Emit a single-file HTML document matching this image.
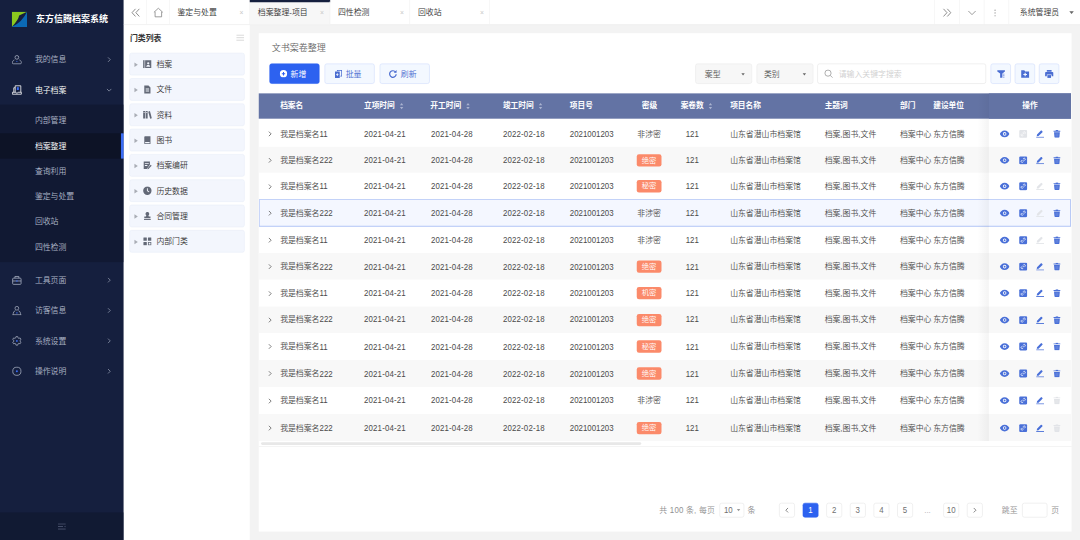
<!DOCTYPE html><html lang="zh-CN"><head><meta charset="utf-8"><title>东方信腾档案系统</title><style>
*{box-sizing:border-box;margin:0;padding:0}
html,body{width:1080px;height:540px;overflow:hidden;background:#f3f3f3}
body{font-family:"Liberation Sans","Noto Sans CJK SC",sans-serif;font-size:14px;color:#444;font-weight:350}
#app{position:absolute;left:0;top:0;width:1920px;height:960px;transform:scale(0.5625);transform-origin:0 0;background:#f3f3f3;overflow:hidden}
.abs{position:absolute}
svg{display:block}
/* sidebar */
#side{position:absolute;left:0;top:0;width:220px;height:960px;background:#151f3e;color:#aeb6c8}
#logo{position:absolute;left:21px;top:21px;width:27px;height:27px}
#title{position:absolute;left:64px;top:22px;font-size:16px;font-weight:700;color:#fff;line-height:24px;white-space:nowrap;letter-spacing:0px}
.mi{position:absolute;left:0;width:220px;height:54px;line-height:54px;padding-left:62px;font-size:14px;color:#aeb6c8;white-space:nowrap}
.mi svg.ic{position:absolute;left:21px;top:18px}
.mi svg.ar{position:absolute;left:189px;top:22px}
#sub{position:absolute;left:0;top:186px;width:220px;height:280px;background:#111933}
.si{position:absolute;left:0;width:220px;height:45px;line-height:45px;padding-left:62px;font-size:14px;color:#aeb6c8;white-space:nowrap}
.si.on{background:#0d1326;color:#fff;border-right:5px solid #3b6df5}
#sfoot{position:absolute;left:0;top:911px;width:220px;height:49px;background:#111a33}
/* tab bar */
#tabs{position:absolute;left:220px;top:0;width:1700px;height:43.5px;background:#fff;border-bottom:1px solid #ececec;box-shadow:0 1px 3px rgba(0,0,0,0.05);z-index:3}
.tcell{position:absolute;top:0;height:43px;border-right:1px solid #f0f0f0}
.tab{position:absolute;top:0;height:43px;width:142.3px;border-right:1px solid #f0f0f0;line-height:44.4px;padding-left:14px;font-size:14px;color:#333;white-space:nowrap}
.tab .x{position:absolute;right:10px;top:0;color:#c8c8c8;font-size:12px}
.tab.on{background:#f7f7f7;border-top:4px solid #151f3e;line-height:37.5px}
/* left panel */
#cat{position:absolute;left:220px;top:44px;width:224px;height:916px;background:#fff}
#cat h3{position:absolute;left:11px;top:12px;font-size:14px;font-weight:700;color:#333;line-height:22px}
.node{position:absolute;left:10px;width:205px;height:40px;background:#f3f6fd;border:1px solid #e8edf8;border-radius:4px;line-height:38px;padding-left:47px;font-size:14px;color:#333;white-space:nowrap}
.node .tri{position:absolute;left:8px;top:15.5px;width:0;height:0;border-left:6px solid #a9adb5;border-top:4.5px solid transparent;border-bottom:4.5px solid transparent}
.node svg{position:absolute;left:23px;top:11px}
/* card */
#card{position:absolute;left:460px;top:59px;width:1445px;height:886px;background:#fff}
#ctitle{position:absolute;left:23px;top:14px;font-size:16px;color:#666;line-height:24px}
.btn{position:absolute;top:54px;height:36px;width:89px;border-radius:4px;font-size:14px;line-height:34px;white-space:nowrap;border:1px solid #cfdcfb;background:#f3f8ff;color:#4a6cd0;padding-left:36.5px}
.btn.pri{background:#2d62f0;border-color:#2d62f0;color:#fff}
.btn svg{position:absolute;left:17px;top:10px}
.sel{position:absolute;top:54px;height:36px;width:101px;border-radius:4px;border:1px solid #e9e9e9;background:#f7f7f7;line-height:34px;padding-left:16px;font-size:14px;color:#555}
.sel i{position:absolute;right:12.5px;top:15.5px;width:0;height:0;border-top:4.5px solid #666;border-left:3.7px solid transparent;border-right:3.7px solid transparent}
#search{position:absolute;left:993px;top:54px;width:300px;height:36px;border:1px solid #e2e2e2;border-radius:4px;background:#fff;line-height:34px;padding-left:37px;color:#cfcfcf;font-size:14px}
#search svg{position:absolute;left:11px;top:9px}
.ib{position:absolute;top:54px;width:36px;height:36px;border-radius:4px;border:1px solid #cfdcfb;background:#f3f8ff}
.ib svg{position:absolute;left:9px;top:9px}
/* table */
#thead{position:absolute;left:0;top:107px;width:1444px;height:45px;background:#6373a4;color:#fff;font-weight:700;font-size:13.7px;line-height:44px}
#thead span{position:absolute;top:0;white-space:nowrap}
.sort{position:absolute;top:17px;width:8px;height:12px}
.sort:before{content:"";position:absolute;left:0;top:0;border-bottom:4px solid #aab3d0;border-left:3.5px solid transparent;border-right:3.5px solid transparent}
.sort:after{content:"";position:absolute;left:0;top:7px;border-top:4px solid #aab3d0;border-left:3.5px solid transparent;border-right:3.5px solid transparent}
.row{position:absolute;left:0;width:1444px;height:47.5px;line-height:47.5px;font-size:14px;color:#4a4a4a;white-space:nowrap}
.row.alt{background:#f8f8f8}
.row.cur{background:#f4f7ff;box-shadow:inset 0 0 0 1.6px #b3c5f6}
.row span{position:absolute;top:0.9px}
.row .dt{letter-spacing:0.300px}
.row .d,.n{display:inline-block;transform:scaleY(1.16);transform-origin:50% 56%}
.row .exp{left:15.4px;top:calc(50% - 5.1px)}
.row .tag{position:absolute;left:672px;top:calc(50% - 10.4px);width:44px;height:22px;border-radius:4px;background:#fb8a6a;color:#fff;font-size:13px;line-height:22px;text-align:center}
#fixsh{position:absolute;left:1278px;top:107px;width:20px;height:618px;background:linear-gradient(to right,rgba(0,0,0,0),rgba(0,0,0,0.045))}
.op{position:absolute;top:calc(50% - 7.5px)}
/* pagination */
.pg{position:absolute;top:835px;height:26px;width:28px;border:1px solid #e4e4e4;border-radius:4px;background:#fff;font-size:14px;color:#707070;text-align:center;line-height:24px}
.pg.on{background:#2d62f0;border-color:#2d62f0;color:#fff}
.pt{position:absolute;top:835px;height:26px;line-height:26px;font-size:14px;color:#919191;white-space:nowrap}
</style></head><body><div id="app">
<div id="side">
<svg id="logo" viewBox="0 0 27 27"><rect width="27" height="27" fill="#0b69b5"/><path d="M0 0H27L0 27Z" fill="#8cc81f"/><path d="M27 0L13 6.500Q12 14 0 27Q19 18 27 0Z" fill="#151f3e"/></svg>
<div id="title">东方信腾档案系统</div>
<div class="mi" style="top:78.8px"><svg class="ic" width="18" height="18" viewBox="0 0 18 18" fill="none" stroke="#aab1c3" stroke-width="1.4"><circle cx="9" cy="5" r="3.3"/><path d="M4.5 9.5C2 10.5 1 12.5 1 14.5Q1 16.5 3 16.5H15Q17 16.5 17 14.5C17 12.5 16 10.5 13.5 9.5"/><circle cx="9" cy="12" r="1" fill="#3a6af0" stroke="none"/></svg>我的信息<svg class="ar" width="10" height="10" viewBox="0 0 10 10"><path d="M3 1l4 4-4 4" fill="none" stroke="#8d96ab" stroke-width="1.4"/></svg></div>
<div class="mi" style="top:132.8px;color:#fff"><svg class="ic" width="18" height="18" viewBox="0 0 18 18" fill="none" stroke="#fff" stroke-width="1.4"><path d="M6 1.5H16V13"/><path d="M6 1.5V13"/><path d="M1 16.5H17V13H11.5Q11 14.5 9 14.5Q7 14.5 6.500 13H1Z"/><path d="M3.500 13V5H6"/><rect x="9" y="4" width="3.500" height="5" fill="#3a6af0" stroke="none"/></svg>电子档案<svg class="ar" width="10" height="10" viewBox="0 0 10 10"><path d="M1 3l4 4 4-4" fill="none" stroke="#8d96ab" stroke-width="1.4"/></svg></div>
<div id="sub">
<div class="si" style="top:5.5px">内部管理</div>
<div class="si on" style="top:50.5px">档案整理</div>
<div class="si" style="top:95.5px">查询利用</div>
<div class="si" style="top:140.5px">鉴定与处置</div>
<div class="si" style="top:185.5px">回收站</div>
<div class="si" style="top:230.5px">四性检测</div>
</div>
<div class="mi" style="top:470.8px"><svg class="ic" width="18" height="18" viewBox="0 0 18 18" fill="none" stroke="#aab1c3" stroke-width="1.4"><rect x="1.500" y="5.500" width="15" height="11" rx="1.500"/><path d="M5.500 5.500V2.500H12.500V5.500"/><path d="M1.500 10.500H16.500"/><path d="M7.500 10.500h3" stroke="#3a6af0" stroke-width="2"/></svg>工具页面<svg class="ar" width="10" height="10" viewBox="0 0 10 10"><path d="M3 1l4 4-4 4" fill="none" stroke="#8d96ab" stroke-width="1.4"/></svg></div>
<div class="mi" style="top:524.8px"><svg class="ic" width="18" height="18" viewBox="0 0 18 18" fill="none" stroke="#aab1c3" stroke-width="1.300"><circle cx="9" cy="5" r="3.300"/><path d="M2.500 16.500V14.500Q2.500 10.500 6.300 9.300M15.500 16.500V14.500Q15.500 10.500 11.700 9.300M1 16.500H17"/><path d="M7.500 13.300h3" stroke="#3a6af0" stroke-width="1.600"/></svg>访客信息<svg class="ar" width="10" height="10" viewBox="0 0 10 10"><path d="M3 1l4 4-4 4" fill="none" stroke="#8d96ab" stroke-width="1.4"/></svg></div>
<div class="mi" style="top:578.8px"><svg class="ic" width="18" height="18" viewBox="0 0 18 18" fill="none" stroke="#aab1c3" stroke-width="1.300" stroke-linejoin="round"><path d="M6.9 3.8L7.4 1.4L10.6 1.4L11.1 3.8L12.4 4.6L14.8 3.8L16.4 6.6L14.5 8.2L14.5 9.8L16.4 11.4L14.8 14.2L12.4 13.4L11.1 14.2L10.6 16.6L7.4 16.6L6.9 14.2L5.6 13.4L3.2 14.2L1.6 11.4L3.5 9.8L3.5 8.2L1.6 6.6L3.2 3.8L5.6 4.6Z"/><circle cx="9" cy="9" r="1.700" fill="#3a6af0" stroke="none"/></svg>系统设置<svg class="ar" width="10" height="10" viewBox="0 0 10 10"><path d="M3 1l4 4-4 4" fill="none" stroke="#8d96ab" stroke-width="1.4"/></svg></div>
<div class="mi" style="top:632.8px"><svg class="ic" width="18" height="18" viewBox="0 0 18 18" fill="none" stroke="#aab1c3" stroke-width="1.4"><circle cx="9" cy="9" r="7.300"/><circle cx="9" cy="9" r="1.800" fill="#3a6af0" stroke="none"/></svg>操作说明<svg class="ar" width="10" height="10" viewBox="0 0 10 10"><path d="M3 1l4 4-4 4" fill="none" stroke="#8d96ab" stroke-width="1.4"/></svg></div>
<div id="sfoot"><svg class="abs" style="left:103px;top:19px" width="14" height="12" viewBox="0 0 14 12"><path d="M0 1.500H14M0 6H9M0 10.500H14" stroke="#4f5873" stroke-width="1.500"/><path d="M13.500 4.500V7.500L11 6Z" fill="#4f5873"/></svg></div>
</div>
<div id="tabs">
<div class="tcell" style="left:0;width:41px"><svg class="abs" style="left:12.500px;top:14px" width="17" height="17" viewBox="0 0 15 15" fill="none" stroke="#777" stroke-width="1.300"><path d="M7 1.500L1.500 7.500L7 13.500M13 1.500L7.500 7.500L13 13.500"/></svg></div>
<div class="tcell" style="left:41px;width:41px"><svg class="abs" style="left:10.500px;top:12.500px" width="19" height="19" viewBox="0 0 18 18" fill="none" stroke="#808080" stroke-width="1.300"><path d="M1.500 8.500L9 1.500L16.500 8.500"/><path d="M3.500 7.500V16H14.500V7.500"/></svg></div>
<div class="tab" style="left:81.5px">鉴定与处置<span class="x">×</span></div>
<div class="tab on" style="left:224.4px">档案整理-项目<span class="x">×</span></div>
<div class="tab" style="left:366.7px">四性检测<span class="x">×</span></div>
<div class="tab" style="left:509px">回收站<span class="x">×</span></div>
<div class="tcell" style="left:1441px;width:45px;border-left:1px solid #f0f0f0"><svg class="abs" style="left:13px;top:14.300px" width="17" height="17" viewBox="0 0 15 15" fill="none" stroke="#777" stroke-width="1.300"><path d="M2 1.500L7.500 7.500L2 13.500M8 1.500L13.500 7.500L8 13.500"/></svg></div>
<div class="tcell" style="left:1486px;width:44px"><svg class="abs" style="left:14px;top:17.800px" width="16" height="10" viewBox="0 0 16 10" fill="none" stroke="#777" stroke-width="1.300"><path d="M1.500 1.500L8 8L14.500 1.500"/></svg></div>
<div class="tcell" style="left:1530px;width:44px"><svg class="abs" style="left:16.600px;top:16px" width="4" height="14" viewBox="0 0 4 14" fill="#8a8a8a"><circle cx="2" cy="2" r="1.100"/><circle cx="2" cy="7" r="1.100"/><circle cx="2" cy="12" r="1.100"/></svg></div>
<div class="abs" style="left:1593px;top:0.800px;line-height:43px;font-size:14px;color:#333;white-space:nowrap">系统管理员</div>
<div class="abs" style="left:1680.500px;top:20.300px;width:0;height:0;border-top:5.500px solid #666;border-left:4.500px solid transparent;border-right:4.500px solid transparent"></div>
</div>
<div id="cat"><h3>门类列表</h3>
<svg class="abs" style="left:199.600px;top:17px" width="14" height="12" viewBox="0 0 14 12"><path d="M0 1.500H14M0 6H14M0 10.500H14" stroke="#cfcfcf" stroke-width="1.400"/></svg>
<div class="node" style="top:50px"><i class="tri"></i><svg width="16" height="16" viewBox="0 0 16 16" fill="#636977"><rect x="0.500" y="1" width="2.500" height="14"/><path d="M4 1H15V15H4Z M9.500 4.500A2 2 0 1 0 9.500 8.500A2 2 0 1 0 9.500 4.500Z M6 12.500C6 10.500 7.500 9.500 9.500 9.500C11.500 9.500 13 10.500 13 12.500Z" fill-rule="evenodd"/></svg>档案</div>
<div class="node" style="top:95px"><i class="tri"></i><svg width="16" height="16" viewBox="0 0 16 16" fill="#636977"><path d="M2.500 1H10L13.500 4.500V15H2.500Z M5 6.500H11V8H5Z M5 10H11V11.500H5Z" fill-rule="evenodd"/></svg>文件</div>
<div class="node" style="top:140px"><i class="tri"></i><svg width="16" height="16" viewBox="0 0 16 16" fill="#636977"><path d="M0.500 1.500H4V14.500H0.500ZM1.300 3.500H3.200V5H1.300Z" fill-rule="evenodd"/><path d="M5 1.500H8.500V14.500H5ZM5.800 3.500H7.700V5H5.800Z" fill-rule="evenodd"/><path d="M9.500 2.500L12.500 1.500L16 14L13 15Z"/></svg>资料</div>
<div class="node" style="top:185px"><i class="tri"></i><svg width="16" height="16" viewBox="0 0 16 16" fill="#636977"><path d="M2.500 2.500Q2.500 1 4 1H13.500V15H4Q2.500 15 2.500 13.500Z M4 11.500V13.500H12V11.500Z" fill-rule="evenodd"/></svg>图书</div>
<div class="node" style="top:230px"><i class="tri"></i><svg width="16" height="16" viewBox="0 0 16 16" fill="#636977"><path d="M1.500 1H12.500V7L7 14.500H1.500Z M3.500 4H10.500V5.500H3.500Z M3.500 7.500H8V9H3.500Z" fill-rule="evenodd"/><path d="M14 7L15.500 8.500L10 14.500L8 15L8.500 13Z"/></svg>档案编研</div>
<div class="node" style="top:275px"><i class="tri"></i><svg width="16" height="16" viewBox="0 0 16 16" fill="#636977"><path d="M8 0.500A7.500 7.500 0 1 0 8 15.500A7.500 7.500 0 1 0 8 0.500Z M7.200 3.500H8.800V7.700L11.500 9.300L10.700 10.600L7.200 8.500Z" fill-rule="evenodd"/></svg>历史数据</div>
<div class="node" style="top:320px"><i class="tri"></i><svg width="16" height="16" viewBox="0 0 16 16" fill="#636977"><path d="M8 1A3.200 3.200 0 0 1 10 6.800L10.500 9H13.500V12H2.500V9H5.500L6 6.800A3.200 3.200 0 0 1 8 1Z"/><rect x="2" y="13.300" width="12" height="1.700"/></svg>合同管理</div>
<div class="node" style="top:365px"><i class="tri"></i><svg width="16" height="16" viewBox="0 0 16 16" fill="#636977"><rect x="1" y="1" width="6" height="6" rx="0.500"/><rect x="9" y="1" width="6" height="6" rx="0.500"/><rect x="1" y="9" width="6" height="6" rx="0.500"/><path d="M9 9H15V15H9Z M10.500 10.500V13.500H13.500V10.500Z" fill-rule="evenodd"/></svg>内部门类</div>
</div>
<div id="card">
<div id="ctitle">文书案卷整理</div>
<div class="btn pri" style="left:19px"><svg width="14" height="14" viewBox="0 0 14 14"><circle cx="7" cy="7" r="6.500" fill="#fff"/><path d="M7 4V10M4 7H10" stroke="#2b5cf0" stroke-width="1.800"/></svg>新增</div>
<div class="btn" style="left:117px"><svg width="15" height="15" viewBox="0 0 15 15" fill="#4a6cd0"><path d="M0.500 3H9V14.500H0.500Z M3.900 6V7.800H2.500V9.200H3.900V11H5.300V9.200H6.700V7.800H5.300V6Z" fill-rule="evenodd"/><path d="M4 0.500H13V12H10V10.700H11.700V1.800H5.300V2.500H4Z"/></svg>批量</div>
<div class="btn" style="left:215px"><svg style="left:14.500px" width="15" height="15" viewBox="0 0 15 15" fill="none" stroke="#4a6cd0" stroke-width="2.200"><path d="M12.300 4.300A5.800 5.800 0 1 0 13.300 8"/><path d="M14 0.500V5.500H9Z" fill="#4a6cd0" stroke="none"/></svg>刷新</div>
<div class="sel" style="left:776px">案型<i></i></div>
<div class="sel" style="left:885px;padding-left:12px">类别<i></i></div>
<div id="search"><svg width="16" height="16" viewBox="0 0 16 16" fill="none" stroke="#999" stroke-width="1.400"><circle cx="7" cy="7" r="5.500"/><path d="M11 11L15 15"/></svg>请输入关键字搜索</div>
<div class="ib" style="left:1300.8px"><svg width="17" height="17" viewBox="0 0 17 17" fill="#4a6dd2"><path d="M2 2H15.500V4.200L11 7.500V15H7V7.500L2 4.200Z"/><rect x="12.800" y="8" width="1.600" height="1.600"/><rect x="12.800" y="10.700" width="1.600" height="1.600"/><rect x="12.800" y="13.400" width="1.600" height="1.600"/></svg></div>
<div class="ib" style="left:1344px"><svg width="17" height="17" viewBox="0 0 17 17" fill="#4a6dd2"><path d="M1.500 2H7L8.500 4H15.500V15H1.500Z M7.500 6.300V8.500H5.300V10.500H7.500V12.700H9.500V10.500H11.700V8.500H9.500V6.300Z" fill-rule="evenodd"/></svg></div>
<div class="ib" style="left:1387.2px"><svg width="17" height="17" viewBox="0 0 17 17" fill="#4a6dd2"><rect x="4" y="1.500" width="8.500" height="3"/><path d="M2.500 5H14Q15.500 5 15.500 6.500V12.500H12.500V9.500H4V12.500H1V6.500Q1 5 2.500 5Z"/><rect x="5" y="10.500" width="6.500" height="5"/></svg></div>
<div id="thead">
<span style="left:38px">档案名</span>
<span style="left:187px">立项时间</span>
<i class="sort" style="left:250.5px"></i>
<span style="left:305px">开工时间</span>
<i class="sort" style="left:368.5px"></i>
<span style="left:434px">竣工时间</span>
<i class="sort" style="left:497.5px"></i>
<span style="left:553px">项目号</span>
<span style="left:681px">密级</span>
<span style="left:750px">案卷数</span>
<i class="sort" style="left:799.5px"></i>
<span style="left:838px">项目名称</span>
<span style="left:1006px">主题词</span>
<span style="left:1140px">部门</span>
<span style="left:1199px">建设单位</span>
<div class="abs" style="left:1298px;top:0;width:146px;height:45px;background:#6373a4;text-align:center">操作</div>
</div>
<div class="row" style="top:154.9px;height:47.3px;line-height:47.3px">
<svg class="abs exp" width="10" height="12" viewBox="0 0 10 12"><path d="M3 2L7 6L3 10" fill="none" stroke="#666" stroke-width="1.500"/></svg>
<span style="left:38px">我是档案名<b class="n" style="font-weight:400">11</b></span><span class="d dt" style="left:187px">2021-04-21</span><span class="d dt" style="left:306px">2021-04-28</span><span class="d dt" style="left:434px">2022-02-18</span><span class="d" style="left:553px">2021001203</span>
<span style="left:673px">非涉密</span>
<span class="d" style="left:759px">121</span><span style="left:838px">山东省潜山市档案馆</span><span style="left:1006px">档案,图书,文件</span><span style="left:1140px">档案中心</span><span style="left:1199px">东方信腾</span>
<svg class="op" style="left:1317px" width="18" height="16" viewBox="0 0 18 16"><path d="M9 2C4.500 2 1.500 5.500 0.500 8C1.500 10.500 4.500 14 9 14C13.500 14 16.500 10.500 17.500 8C16.500 5.500 13.500 2 9 2ZM9 4.800A3.200 3.200 0 1 1 9 11.200A3.200 3.200 0 1 1 9 4.800Z" fill="#4a70d8" fill-rule="evenodd"/><circle cx="9" cy="8" r="1.700" fill="#4a70d8"/></svg><svg class="op" style="left:1351px" width="16" height="16" viewBox="0 0 16 16"><rect x="1" y="1" width="14" height="14" rx="2" fill="#e2e4e8"/><path d="M6.800 9.200L9.200 6.800M5.800 7.500L4.800 8.500A1.900 1.900 0 0 0 7.500 11.200L8.500 10.200M7.500 5.800L8.500 4.800A1.900 1.900 0 0 1 11.200 7.500L10.200 8.500" fill="none" stroke="#fff" stroke-width="1.300"/></svg><svg class="op" style="left:1382px;top:calc(50% - 6.5px)" width="14" height="14" viewBox="0 0 14 14"><path d="M1 11.200L1.600 8.200L8.600 1.200Q9.200 0.600 9.800 1.200L11.300 2.700Q11.900 3.300 11.300 3.900L4.300 10.900Z" fill="#4a70d8"/><rect x="0" y="12.300" width="14" height="1.600" fill="#4a70d8"/></svg><svg class="op" style="left:1411.700px;top:calc(50% - 6.5px)" width="14" height="14" viewBox="0 0 14 14"><path d="M4.800 0.300H9.200V1.600H13V3.200H1V1.600H4.800Z" fill="#4a70d8"/><path d="M1.800 4.200H12.200L11.400 12.600Q11.300 13.800 10.100 13.800H3.900Q2.700 13.800 2.600 12.600Z" fill="#4a70d8"/><path d="M5.200 6V11.800M7 6V11.800M8.800 6V11.800" stroke="#fff" stroke-opacity="0.300" stroke-width="0.800"/></svg>
</div>
<div class="row alt" style="top:202.2px;height:46.2px;line-height:46.2px">
<svg class="abs exp" width="10" height="12" viewBox="0 0 10 12"><path d="M3 2L7 6L3 10" fill="none" stroke="#666" stroke-width="1.500"/></svg>
<span style="left:38px">我是档案名<b class="n" style="font-weight:400">222</b></span><span class="d dt" style="left:187px">2021-04-21</span><span class="d dt" style="left:306px">2021-04-28</span><span class="d dt" style="left:434px">2022-02-18</span><span class="d" style="left:553px">2021001203</span>
<span class="tag">绝密</span>
<span class="d" style="left:759px">121</span><span style="left:838px">山东省潜山市档案馆</span><span style="left:1006px">档案,图书,文件</span><span style="left:1140px">档案中心</span><span style="left:1199px">东方信腾</span>
<svg class="op" style="left:1317px" width="18" height="16" viewBox="0 0 18 16"><path d="M9 2C4.500 2 1.500 5.500 0.500 8C1.500 10.500 4.500 14 9 14C13.500 14 16.500 10.500 17.500 8C16.500 5.500 13.500 2 9 2ZM9 4.800A3.200 3.200 0 1 1 9 11.200A3.200 3.200 0 1 1 9 4.800Z" fill="#4a70d8" fill-rule="evenodd"/><circle cx="9" cy="8" r="1.700" fill="#4a70d8"/></svg><svg class="op" style="left:1351px" width="16" height="16" viewBox="0 0 16 16"><rect x="1" y="1" width="14" height="14" rx="2" fill="#4a70d8"/><path d="M6.800 9.200L9.200 6.800M5.800 7.500L4.800 8.500A1.900 1.900 0 0 0 7.500 11.200L8.500 10.200M7.500 5.800L8.500 4.800A1.900 1.900 0 0 1 11.200 7.500L10.200 8.500" fill="none" stroke="#fff" stroke-width="1.300"/></svg><svg class="op" style="left:1382px;top:calc(50% - 6.5px)" width="14" height="14" viewBox="0 0 14 14"><path d="M1 11.200L1.600 8.200L8.600 1.200Q9.200 0.600 9.800 1.200L11.300 2.700Q11.900 3.300 11.300 3.900L4.300 10.900Z" fill="#4a70d8"/><rect x="0" y="12.300" width="14" height="1.600" fill="#4a70d8"/></svg><svg class="op" style="left:1411.700px;top:calc(50% - 6.5px)" width="14" height="14" viewBox="0 0 14 14"><path d="M4.800 0.300H9.200V1.600H13V3.200H1V1.600H4.800Z" fill="#4a70d8"/><path d="M1.800 4.200H12.200L11.400 12.600Q11.300 13.800 10.100 13.800H3.900Q2.700 13.800 2.600 12.600Z" fill="#4a70d8"/><path d="M5.200 6V11.800M7 6V11.800M8.800 6V11.800" stroke="#fff" stroke-opacity="0.300" stroke-width="0.800"/></svg>
</div>
<div class="row" style="top:248.4px;height:46.9px;line-height:46.9px">
<svg class="abs exp" width="10" height="12" viewBox="0 0 10 12"><path d="M3 2L7 6L3 10" fill="none" stroke="#666" stroke-width="1.500"/></svg>
<span style="left:38px">我是档案名<b class="n" style="font-weight:400">11</b></span><span class="d dt" style="left:187px">2021-04-21</span><span class="d dt" style="left:306px">2021-04-28</span><span class="d dt" style="left:434px">2022-02-18</span><span class="d" style="left:553px">2021001203</span>
<span class="tag">秘密</span>
<span class="d" style="left:759px">121</span><span style="left:838px">山东省潜山市档案馆</span><span style="left:1006px">档案,图书,文件</span><span style="left:1140px">档案中心</span><span style="left:1199px">东方信腾</span>
<svg class="op" style="left:1317px" width="18" height="16" viewBox="0 0 18 16"><path d="M9 2C4.500 2 1.500 5.500 0.500 8C1.500 10.500 4.500 14 9 14C13.500 14 16.500 10.500 17.500 8C16.500 5.500 13.500 2 9 2ZM9 4.800A3.200 3.200 0 1 1 9 11.200A3.200 3.200 0 1 1 9 4.800Z" fill="#4a70d8" fill-rule="evenodd"/><circle cx="9" cy="8" r="1.700" fill="#4a70d8"/></svg><svg class="op" style="left:1351px" width="16" height="16" viewBox="0 0 16 16"><rect x="1" y="1" width="14" height="14" rx="2" fill="#4a70d8"/><path d="M6.800 9.200L9.200 6.800M5.800 7.500L4.800 8.500A1.900 1.900 0 0 0 7.500 11.200L8.500 10.200M7.500 5.800L8.500 4.800A1.900 1.900 0 0 1 11.200 7.500L10.200 8.500" fill="none" stroke="#fff" stroke-width="1.300"/></svg><svg class="op" style="left:1382px;top:calc(50% - 6.5px)" width="14" height="14" viewBox="0 0 14 14"><path d="M1 11.200L1.600 8.200L8.600 1.200Q9.200 0.600 9.800 1.200L11.300 2.700Q11.900 3.300 11.300 3.900L4.300 10.900Z" fill="#e2e4e8"/><rect x="0" y="12.300" width="14" height="1.600" fill="#e2e4e8"/></svg><svg class="op" style="left:1411.700px;top:calc(50% - 6.5px)" width="14" height="14" viewBox="0 0 14 14"><path d="M4.800 0.300H9.200V1.600H13V3.200H1V1.600H4.800Z" fill="#4a70d8"/><path d="M1.800 4.200H12.200L11.400 12.600Q11.300 13.800 10.100 13.800H3.900Q2.700 13.800 2.600 12.600Z" fill="#4a70d8"/><path d="M5.200 6V11.800M7 6V11.800M8.800 6V11.800" stroke="#fff" stroke-opacity="0.300" stroke-width="0.800"/></svg>
</div>
<div class="row cur" style="top:295.3px;height:48.4px;line-height:48.4px">
<svg class="abs exp" width="10" height="12" viewBox="0 0 10 12"><path d="M3 2L7 6L3 10" fill="none" stroke="#666" stroke-width="1.500"/></svg>
<span style="left:38px">我是档案名<b class="n" style="font-weight:400">222</b></span><span class="d dt" style="left:187px">2021-04-21</span><span class="d dt" style="left:306px">2021-04-28</span><span class="d dt" style="left:434px">2022-02-18</span><span class="d" style="left:553px">2021001203</span>
<span style="left:673px">非涉密</span>
<span class="d" style="left:759px">121</span><span style="left:838px">山东省潜山市档案馆</span><span style="left:1006px">档案,图书,文件</span><span style="left:1140px">档案中心</span><span style="left:1199px">东方信腾</span>
<svg class="op" style="left:1317px" width="18" height="16" viewBox="0 0 18 16"><path d="M9 2C4.500 2 1.500 5.500 0.500 8C1.500 10.500 4.500 14 9 14C13.500 14 16.500 10.500 17.500 8C16.500 5.500 13.500 2 9 2ZM9 4.800A3.200 3.200 0 1 1 9 11.200A3.200 3.200 0 1 1 9 4.800Z" fill="#4a70d8" fill-rule="evenodd"/><circle cx="9" cy="8" r="1.700" fill="#4a70d8"/></svg><svg class="op" style="left:1351px" width="16" height="16" viewBox="0 0 16 16"><rect x="1" y="1" width="14" height="14" rx="2" fill="#4a70d8"/><path d="M6.800 9.200L9.200 6.800M5.800 7.500L4.800 8.500A1.900 1.900 0 0 0 7.500 11.200L8.500 10.200M7.500 5.800L8.500 4.800A1.900 1.900 0 0 1 11.200 7.500L10.200 8.500" fill="none" stroke="#fff" stroke-width="1.300"/></svg><svg class="op" style="left:1382px;top:calc(50% - 6.5px)" width="14" height="14" viewBox="0 0 14 14"><path d="M1 11.200L1.600 8.200L8.600 1.200Q9.200 0.600 9.800 1.200L11.300 2.700Q11.900 3.300 11.300 3.900L4.300 10.900Z" fill="#e2e4e8"/><rect x="0" y="12.300" width="14" height="1.600" fill="#e2e4e8"/></svg><svg class="op" style="left:1411.700px;top:calc(50% - 6.5px)" width="14" height="14" viewBox="0 0 14 14"><path d="M4.800 0.300H9.200V1.600H13V3.200H1V1.600H4.800Z" fill="#4a70d8"/><path d="M1.800 4.200H12.200L11.400 12.600Q11.300 13.800 10.100 13.800H3.900Q2.700 13.800 2.600 12.600Z" fill="#4a70d8"/><path d="M5.200 6V11.800M7 6V11.800M8.800 6V11.800" stroke="#fff" stroke-opacity="0.300" stroke-width="0.800"/></svg>
</div>
<div class="row" style="top:343.7px;height:47.1px;line-height:47.1px">
<svg class="abs exp" width="10" height="12" viewBox="0 0 10 12"><path d="M3 2L7 6L3 10" fill="none" stroke="#666" stroke-width="1.500"/></svg>
<span style="left:38px">我是档案名<b class="n" style="font-weight:400">11</b></span><span class="d dt" style="left:187px">2021-04-21</span><span class="d dt" style="left:306px">2021-04-28</span><span class="d dt" style="left:434px">2022-02-18</span><span class="d" style="left:553px">2021001203</span>
<span style="left:673px">非涉密</span>
<span class="d" style="left:759px">121</span><span style="left:838px">山东省潜山市档案馆</span><span style="left:1006px">档案,图书,文件</span><span style="left:1140px">档案中心</span><span style="left:1199px">东方信腾</span>
<svg class="op" style="left:1317px" width="18" height="16" viewBox="0 0 18 16"><path d="M9 2C4.500 2 1.500 5.500 0.500 8C1.500 10.500 4.500 14 9 14C13.500 14 16.500 10.500 17.500 8C16.500 5.500 13.500 2 9 2ZM9 4.800A3.200 3.200 0 1 1 9 11.200A3.200 3.200 0 1 1 9 4.800Z" fill="#4a70d8" fill-rule="evenodd"/><circle cx="9" cy="8" r="1.700" fill="#4a70d8"/></svg><svg class="op" style="left:1351px" width="16" height="16" viewBox="0 0 16 16"><rect x="1" y="1" width="14" height="14" rx="2" fill="#4a70d8"/><path d="M6.800 9.200L9.200 6.800M5.800 7.500L4.800 8.500A1.900 1.900 0 0 0 7.500 11.200L8.500 10.200M7.500 5.800L8.500 4.800A1.900 1.900 0 0 1 11.200 7.500L10.200 8.500" fill="none" stroke="#fff" stroke-width="1.300"/></svg><svg class="op" style="left:1382px;top:calc(50% - 6.5px)" width="14" height="14" viewBox="0 0 14 14"><path d="M1 11.200L1.600 8.200L8.600 1.200Q9.200 0.600 9.800 1.200L11.300 2.700Q11.900 3.300 11.300 3.900L4.300 10.900Z" fill="#e2e4e8"/><rect x="0" y="12.300" width="14" height="1.600" fill="#e2e4e8"/></svg><svg class="op" style="left:1411.700px;top:calc(50% - 6.5px)" width="14" height="14" viewBox="0 0 14 14"><path d="M4.800 0.300H9.200V1.600H13V3.200H1V1.600H4.800Z" fill="#4a70d8"/><path d="M1.800 4.200H12.200L11.400 12.600Q11.300 13.800 10.100 13.800H3.900Q2.700 13.800 2.600 12.600Z" fill="#4a70d8"/><path d="M5.200 6V11.800M7 6V11.800M8.800 6V11.800" stroke="#fff" stroke-opacity="0.300" stroke-width="0.800"/></svg>
</div>
<div class="row alt" style="top:390.8px;height:47.1px;line-height:47.1px">
<svg class="abs exp" width="10" height="12" viewBox="0 0 10 12"><path d="M3 2L7 6L3 10" fill="none" stroke="#666" stroke-width="1.500"/></svg>
<span style="left:38px">我是档案名<b class="n" style="font-weight:400">222</b></span><span class="d dt" style="left:187px">2021-04-21</span><span class="d dt" style="left:306px">2021-04-28</span><span class="d dt" style="left:434px">2022-02-18</span><span class="d" style="left:553px">2021001203</span>
<span class="tag">绝密</span>
<span class="d" style="left:759px">121</span><span style="left:838px">山东省潜山市档案馆</span><span style="left:1006px">档案,图书,文件</span><span style="left:1140px">档案中心</span><span style="left:1199px">东方信腾</span>
<svg class="op" style="left:1317px" width="18" height="16" viewBox="0 0 18 16"><path d="M9 2C4.500 2 1.500 5.500 0.500 8C1.500 10.500 4.500 14 9 14C13.500 14 16.500 10.500 17.500 8C16.500 5.500 13.500 2 9 2ZM9 4.800A3.200 3.200 0 1 1 9 11.200A3.200 3.200 0 1 1 9 4.800Z" fill="#4a70d8" fill-rule="evenodd"/><circle cx="9" cy="8" r="1.700" fill="#4a70d8"/></svg><svg class="op" style="left:1351px" width="16" height="16" viewBox="0 0 16 16"><rect x="1" y="1" width="14" height="14" rx="2" fill="#4a70d8"/><path d="M6.800 9.200L9.200 6.800M5.800 7.500L4.800 8.500A1.900 1.900 0 0 0 7.500 11.200L8.500 10.200M7.500 5.800L8.500 4.800A1.900 1.900 0 0 1 11.200 7.500L10.200 8.500" fill="none" stroke="#fff" stroke-width="1.300"/></svg><svg class="op" style="left:1382px;top:calc(50% - 6.5px)" width="14" height="14" viewBox="0 0 14 14"><path d="M1 11.200L1.600 8.200L8.600 1.200Q9.200 0.600 9.800 1.200L11.300 2.700Q11.900 3.300 11.300 3.900L4.300 10.900Z" fill="#4a70d8"/><rect x="0" y="12.300" width="14" height="1.600" fill="#4a70d8"/></svg><svg class="op" style="left:1411.700px;top:calc(50% - 6.5px)" width="14" height="14" viewBox="0 0 14 14"><path d="M4.800 0.300H9.200V1.600H13V3.200H1V1.600H4.800Z" fill="#4a70d8"/><path d="M1.800 4.200H12.200L11.400 12.600Q11.300 13.800 10.100 13.800H3.900Q2.700 13.800 2.600 12.600Z" fill="#4a70d8"/><path d="M5.200 6V11.800M7 6V11.800M8.800 6V11.800" stroke="#fff" stroke-opacity="0.300" stroke-width="0.800"/></svg>
</div>
<div class="row" style="top:437.9px;height:47.6px;line-height:47.6px">
<svg class="abs exp" width="10" height="12" viewBox="0 0 10 12"><path d="M3 2L7 6L3 10" fill="none" stroke="#666" stroke-width="1.500"/></svg>
<span style="left:38px">我是档案名<b class="n" style="font-weight:400">11</b></span><span class="d dt" style="left:187px">2021-04-21</span><span class="d dt" style="left:306px">2021-04-28</span><span class="d dt" style="left:434px">2022-02-18</span><span class="d" style="left:553px">2021001203</span>
<span class="tag">机密</span>
<span class="d" style="left:759px">121</span><span style="left:838px">山东省潜山市档案馆</span><span style="left:1006px">档案,图书,文件</span><span style="left:1140px">档案中心</span><span style="left:1199px">东方信腾</span>
<svg class="op" style="left:1317px" width="18" height="16" viewBox="0 0 18 16"><path d="M9 2C4.500 2 1.500 5.500 0.500 8C1.500 10.500 4.500 14 9 14C13.500 14 16.500 10.500 17.500 8C16.500 5.500 13.500 2 9 2ZM9 4.800A3.200 3.200 0 1 1 9 11.200A3.200 3.200 0 1 1 9 4.800Z" fill="#4a70d8" fill-rule="evenodd"/><circle cx="9" cy="8" r="1.700" fill="#4a70d8"/></svg><svg class="op" style="left:1351px" width="16" height="16" viewBox="0 0 16 16"><rect x="1" y="1" width="14" height="14" rx="2" fill="#4a70d8"/><path d="M6.800 9.200L9.200 6.800M5.800 7.500L4.800 8.500A1.900 1.900 0 0 0 7.500 11.200L8.500 10.200M7.500 5.800L8.500 4.800A1.900 1.900 0 0 1 11.200 7.500L10.200 8.500" fill="none" stroke="#fff" stroke-width="1.300"/></svg><svg class="op" style="left:1382px;top:calc(50% - 6.5px)" width="14" height="14" viewBox="0 0 14 14"><path d="M1 11.200L1.600 8.200L8.600 1.200Q9.200 0.600 9.800 1.200L11.300 2.700Q11.900 3.300 11.300 3.900L4.300 10.900Z" fill="#4a70d8"/><rect x="0" y="12.300" width="14" height="1.600" fill="#4a70d8"/></svg><svg class="op" style="left:1411.700px;top:calc(50% - 6.5px)" width="14" height="14" viewBox="0 0 14 14"><path d="M4.800 0.300H9.200V1.600H13V3.200H1V1.600H4.800Z" fill="#4a70d8"/><path d="M1.800 4.200H12.200L11.400 12.600Q11.300 13.800 10.100 13.800H3.900Q2.700 13.800 2.600 12.600Z" fill="#4a70d8"/><path d="M5.200 6V11.800M7 6V11.800M8.800 6V11.800" stroke="#fff" stroke-opacity="0.300" stroke-width="0.800"/></svg>
</div>
<div class="row alt" style="top:485.5px;height:47.0px;line-height:47.0px">
<svg class="abs exp" width="10" height="12" viewBox="0 0 10 12"><path d="M3 2L7 6L3 10" fill="none" stroke="#666" stroke-width="1.500"/></svg>
<span style="left:38px">我是档案名<b class="n" style="font-weight:400">222</b></span><span class="d dt" style="left:187px">2021-04-21</span><span class="d dt" style="left:306px">2021-04-28</span><span class="d dt" style="left:434px">2022-02-18</span><span class="d" style="left:553px">2021001203</span>
<span class="tag">绝密</span>
<span class="d" style="left:759px">121</span><span style="left:838px">山东省潜山市档案馆</span><span style="left:1006px">档案,图书,文件</span><span style="left:1140px">档案中心</span><span style="left:1199px">东方信腾</span>
<svg class="op" style="left:1317px" width="18" height="16" viewBox="0 0 18 16"><path d="M9 2C4.500 2 1.500 5.500 0.500 8C1.500 10.500 4.500 14 9 14C13.500 14 16.500 10.500 17.500 8C16.500 5.500 13.500 2 9 2ZM9 4.800A3.200 3.200 0 1 1 9 11.200A3.200 3.200 0 1 1 9 4.800Z" fill="#4a70d8" fill-rule="evenodd"/><circle cx="9" cy="8" r="1.700" fill="#4a70d8"/></svg><svg class="op" style="left:1351px" width="16" height="16" viewBox="0 0 16 16"><rect x="1" y="1" width="14" height="14" rx="2" fill="#4a70d8"/><path d="M6.800 9.200L9.200 6.800M5.800 7.500L4.800 8.500A1.900 1.900 0 0 0 7.500 11.200L8.500 10.200M7.500 5.800L8.500 4.800A1.900 1.900 0 0 1 11.200 7.500L10.200 8.500" fill="none" stroke="#fff" stroke-width="1.300"/></svg><svg class="op" style="left:1382px;top:calc(50% - 6.5px)" width="14" height="14" viewBox="0 0 14 14"><path d="M1 11.200L1.600 8.200L8.600 1.200Q9.200 0.600 9.800 1.200L11.300 2.700Q11.900 3.300 11.300 3.900L4.300 10.900Z" fill="#4a70d8"/><rect x="0" y="12.300" width="14" height="1.600" fill="#4a70d8"/></svg><svg class="op" style="left:1411.700px;top:calc(50% - 6.5px)" width="14" height="14" viewBox="0 0 14 14"><path d="M4.800 0.300H9.200V1.600H13V3.200H1V1.600H4.800Z" fill="#4a70d8"/><path d="M1.800 4.200H12.200L11.400 12.600Q11.300 13.800 10.100 13.800H3.900Q2.700 13.800 2.600 12.600Z" fill="#4a70d8"/><path d="M5.200 6V11.800M7 6V11.800M8.800 6V11.800" stroke="#fff" stroke-opacity="0.300" stroke-width="0.800"/></svg>
</div>
<div class="row" style="top:532.5px;height:48.0px;line-height:48.0px">
<svg class="abs exp" width="10" height="12" viewBox="0 0 10 12"><path d="M3 2L7 6L3 10" fill="none" stroke="#666" stroke-width="1.500"/></svg>
<span style="left:38px">我是档案名<b class="n" style="font-weight:400">11</b></span><span class="d dt" style="left:187px">2021-04-21</span><span class="d dt" style="left:306px">2021-04-28</span><span class="d dt" style="left:434px">2022-02-18</span><span class="d" style="left:553px">2021001203</span>
<span class="tag">秘密</span>
<span class="d" style="left:759px">121</span><span style="left:838px">山东省潜山市档案馆</span><span style="left:1006px">档案,图书,文件</span><span style="left:1140px">档案中心</span><span style="left:1199px">东方信腾</span>
<svg class="op" style="left:1317px" width="18" height="16" viewBox="0 0 18 16"><path d="M9 2C4.500 2 1.500 5.500 0.500 8C1.500 10.500 4.500 14 9 14C13.500 14 16.500 10.500 17.500 8C16.500 5.500 13.500 2 9 2ZM9 4.800A3.200 3.200 0 1 1 9 11.200A3.200 3.200 0 1 1 9 4.800Z" fill="#4a70d8" fill-rule="evenodd"/><circle cx="9" cy="8" r="1.700" fill="#4a70d8"/></svg><svg class="op" style="left:1351px" width="16" height="16" viewBox="0 0 16 16"><rect x="1" y="1" width="14" height="14" rx="2" fill="#4a70d8"/><path d="M6.800 9.200L9.200 6.800M5.800 7.500L4.800 8.500A1.900 1.900 0 0 0 7.500 11.200L8.500 10.200M7.500 5.800L8.500 4.800A1.900 1.900 0 0 1 11.200 7.500L10.200 8.500" fill="none" stroke="#fff" stroke-width="1.300"/></svg><svg class="op" style="left:1382px;top:calc(50% - 6.5px)" width="14" height="14" viewBox="0 0 14 14"><path d="M1 11.200L1.600 8.200L8.600 1.200Q9.200 0.600 9.800 1.200L11.300 2.700Q11.900 3.300 11.300 3.900L4.300 10.900Z" fill="#4a70d8"/><rect x="0" y="12.300" width="14" height="1.600" fill="#4a70d8"/></svg><svg class="op" style="left:1411.700px;top:calc(50% - 6.5px)" width="14" height="14" viewBox="0 0 14 14"><path d="M4.800 0.300H9.200V1.600H13V3.200H1V1.600H4.800Z" fill="#4a70d8"/><path d="M1.800 4.200H12.200L11.400 12.600Q11.300 13.800 10.100 13.800H3.900Q2.700 13.800 2.600 12.600Z" fill="#4a70d8"/><path d="M5.200 6V11.800M7 6V11.800M8.800 6V11.800" stroke="#fff" stroke-opacity="0.300" stroke-width="0.800"/></svg>
</div>
<div class="row alt" style="top:580.5px;height:48.0px;line-height:48.0px">
<svg class="abs exp" width="10" height="12" viewBox="0 0 10 12"><path d="M3 2L7 6L3 10" fill="none" stroke="#666" stroke-width="1.500"/></svg>
<span style="left:38px">我是档案名<b class="n" style="font-weight:400">222</b></span><span class="d dt" style="left:187px">2021-04-21</span><span class="d dt" style="left:306px">2021-04-28</span><span class="d dt" style="left:434px">2022-02-18</span><span class="d" style="left:553px">2021001203</span>
<span class="tag">绝密</span>
<span class="d" style="left:759px">121</span><span style="left:838px">山东省潜山市档案馆</span><span style="left:1006px">档案,图书,文件</span><span style="left:1140px">档案中心</span><span style="left:1199px">东方信腾</span>
<svg class="op" style="left:1317px" width="18" height="16" viewBox="0 0 18 16"><path d="M9 2C4.500 2 1.500 5.500 0.500 8C1.500 10.500 4.500 14 9 14C13.500 14 16.500 10.500 17.500 8C16.500 5.500 13.500 2 9 2ZM9 4.800A3.200 3.200 0 1 1 9 11.200A3.200 3.200 0 1 1 9 4.800Z" fill="#4a70d8" fill-rule="evenodd"/><circle cx="9" cy="8" r="1.700" fill="#4a70d8"/></svg><svg class="op" style="left:1351px" width="16" height="16" viewBox="0 0 16 16"><rect x="1" y="1" width="14" height="14" rx="2" fill="#4a70d8"/><path d="M6.800 9.200L9.200 6.800M5.800 7.500L4.800 8.500A1.900 1.900 0 0 0 7.500 11.200L8.500 10.200M7.500 5.800L8.500 4.800A1.900 1.900 0 0 1 11.200 7.500L10.200 8.500" fill="none" stroke="#fff" stroke-width="1.300"/></svg><svg class="op" style="left:1382px;top:calc(50% - 6.5px)" width="14" height="14" viewBox="0 0 14 14"><path d="M1 11.200L1.600 8.200L8.600 1.200Q9.200 0.600 9.800 1.200L11.300 2.700Q11.900 3.300 11.300 3.900L4.300 10.900Z" fill="#4a70d8"/><rect x="0" y="12.300" width="14" height="1.600" fill="#4a70d8"/></svg><svg class="op" style="left:1411.700px;top:calc(50% - 6.5px)" width="14" height="14" viewBox="0 0 14 14"><path d="M4.800 0.300H9.200V1.600H13V3.200H1V1.600H4.800Z" fill="#4a70d8"/><path d="M1.800 4.200H12.200L11.400 12.600Q11.300 13.800 10.100 13.800H3.900Q2.700 13.800 2.600 12.600Z" fill="#4a70d8"/><path d="M5.200 6V11.800M7 6V11.800M8.800 6V11.800" stroke="#fff" stroke-opacity="0.300" stroke-width="0.800"/></svg>
</div>
<div class="row" style="top:628.5px;height:48.5px;line-height:48.5px">
<svg class="abs exp" width="10" height="12" viewBox="0 0 10 12"><path d="M3 2L7 6L3 10" fill="none" stroke="#666" stroke-width="1.500"/></svg>
<span style="left:38px">我是档案名<b class="n" style="font-weight:400">11</b></span><span class="d dt" style="left:187px">2021-04-21</span><span class="d dt" style="left:306px">2021-04-28</span><span class="d dt" style="left:434px">2022-02-18</span><span class="d" style="left:553px">2021001203</span>
<span style="left:673px">非涉密</span>
<span class="d" style="left:759px">121</span><span style="left:838px">山东省潜山市档案馆</span><span style="left:1006px">档案,图书,文件</span><span style="left:1140px">档案中心</span><span style="left:1199px">东方信腾</span>
<svg class="op" style="left:1317px" width="18" height="16" viewBox="0 0 18 16"><path d="M9 2C4.500 2 1.500 5.500 0.500 8C1.500 10.500 4.500 14 9 14C13.500 14 16.500 10.500 17.500 8C16.500 5.500 13.500 2 9 2ZM9 4.800A3.200 3.200 0 1 1 9 11.200A3.200 3.200 0 1 1 9 4.800Z" fill="#4a70d8" fill-rule="evenodd"/><circle cx="9" cy="8" r="1.700" fill="#4a70d8"/></svg><svg class="op" style="left:1351px" width="16" height="16" viewBox="0 0 16 16"><rect x="1" y="1" width="14" height="14" rx="2" fill="#4a70d8"/><path d="M6.800 9.200L9.200 6.800M5.800 7.500L4.800 8.500A1.900 1.900 0 0 0 7.500 11.200L8.500 10.200M7.500 5.800L8.500 4.800A1.900 1.900 0 0 1 11.200 7.500L10.200 8.500" fill="none" stroke="#fff" stroke-width="1.300"/></svg><svg class="op" style="left:1382px;top:calc(50% - 6.5px)" width="14" height="14" viewBox="0 0 14 14"><path d="M1 11.200L1.600 8.200L8.600 1.200Q9.200 0.600 9.800 1.200L11.300 2.700Q11.900 3.300 11.300 3.900L4.300 10.900Z" fill="#4a70d8"/><rect x="0" y="12.300" width="14" height="1.600" fill="#4a70d8"/></svg><svg class="op" style="left:1411.700px;top:calc(50% - 6.5px)" width="14" height="14" viewBox="0 0 14 14"><path d="M4.800 0.300H9.200V1.600H13V3.200H1V1.600H4.800Z" fill="#e2e4e8"/><path d="M1.800 4.200H12.200L11.400 12.600Q11.300 13.800 10.100 13.800H3.900Q2.700 13.800 2.600 12.600Z" fill="#e2e4e8"/><path d="M5.200 6V11.800M7 6V11.800M8.800 6V11.800" stroke="#fff" stroke-opacity="0.300" stroke-width="0.800"/></svg>
</div>
<div class="row alt" style="top:677.0px;height:48.0px;line-height:48.0px">
<svg class="abs exp" width="10" height="12" viewBox="0 0 10 12"><path d="M3 2L7 6L3 10" fill="none" stroke="#666" stroke-width="1.500"/></svg>
<span style="left:38px">我是档案名<b class="n" style="font-weight:400">222</b></span><span class="d dt" style="left:187px">2021-04-21</span><span class="d dt" style="left:306px">2021-04-28</span><span class="d dt" style="left:434px">2022-02-18</span><span class="d" style="left:553px">2021001203</span>
<span class="tag">绝密</span>
<span class="d" style="left:759px">121</span><span style="left:838px">山东省潜山市档案馆</span><span style="left:1006px">档案,图书,文件</span><span style="left:1140px">档案中心</span><span style="left:1199px">东方信腾</span>
<svg class="op" style="left:1317px" width="18" height="16" viewBox="0 0 18 16"><path d="M9 2C4.500 2 1.500 5.500 0.500 8C1.500 10.500 4.500 14 9 14C13.500 14 16.500 10.500 17.500 8C16.500 5.500 13.500 2 9 2ZM9 4.800A3.200 3.200 0 1 1 9 11.200A3.200 3.200 0 1 1 9 4.800Z" fill="#4a70d8" fill-rule="evenodd"/><circle cx="9" cy="8" r="1.700" fill="#4a70d8"/></svg><svg class="op" style="left:1351px" width="16" height="16" viewBox="0 0 16 16"><rect x="1" y="1" width="14" height="14" rx="2" fill="#4a70d8"/><path d="M6.800 9.200L9.200 6.800M5.800 7.500L4.800 8.500A1.900 1.900 0 0 0 7.500 11.200L8.500 10.200M7.500 5.800L8.500 4.800A1.900 1.900 0 0 1 11.200 7.500L10.200 8.500" fill="none" stroke="#fff" stroke-width="1.300"/></svg><svg class="op" style="left:1382px;top:calc(50% - 6.5px)" width="14" height="14" viewBox="0 0 14 14"><path d="M1 11.200L1.600 8.200L8.600 1.200Q9.200 0.600 9.800 1.200L11.300 2.700Q11.900 3.300 11.300 3.900L4.300 10.900Z" fill="#4a70d8"/><rect x="0" y="12.300" width="14" height="1.600" fill="#4a70d8"/></svg><svg class="op" style="left:1411.700px;top:calc(50% - 6.5px)" width="14" height="14" viewBox="0 0 14 14"><path d="M4.800 0.300H9.200V1.600H13V3.200H1V1.600H4.800Z" fill="#e2e4e8"/><path d="M1.800 4.200H12.200L11.400 12.600Q11.300 13.800 10.100 13.800H3.900Q2.700 13.800 2.600 12.600Z" fill="#e2e4e8"/><path d="M5.200 6V11.800M7 6V11.800M8.800 6V11.800" stroke="#fff" stroke-opacity="0.300" stroke-width="0.800"/></svg>
</div>
<div id="fixsh"></div>
<div class="abs" style="left:4px;top:727.3px;width:676px;height:5px;border-radius:3px;background:#e8e8e8"></div>
<div class="abs" style="left:0;top:734px;width:1445px;height:1px;background:#ebebeb"></div>
<div class="pt" style="left:712px;letter-spacing:0.400px">共 <b class="n" style="font-weight:400">100</b> 条, 每页</div>
<div class="pg" style="left:819px;width:44px;text-align:left;padding-left:7px"><b class="n" style="font-weight:400">10</b><i class="abs" style="left:30px;top:10px;width:0;height:0;border-top:4.500px solid #999;border-left:3.500px solid transparent;border-right:3.500px solid transparent"></i></div>
<div class="pt" style="left:869px">条</div>
<div class="pg" style="left:925px"><svg class="abs" style="left:9px;top:7px" width="8" height="10" viewBox="0 0 8 10"><path d="M6 1L2 5L6 9" fill="none" stroke="#666" stroke-width="1.400"/></svg></div>
<div class="pg on" style="left:967px"><b class="n" style="font-weight:400">1</b></div>
<div class="pg" style="left:1009px"><b class="n" style="font-weight:400">2</b></div>
<div class="pg" style="left:1051px"><b class="n" style="font-weight:400">3</b></div>
<div class="pg" style="left:1093px"><b class="n" style="font-weight:400">4</b></div>
<div class="pg" style="left:1135px"><b class="n" style="font-weight:400">5</b></div>
<div class="pt" style="left:1183px;color:#aaa">...</div>
<div class="pg" style="left:1217px"><b class="n" style="font-weight:400">10</b></div>
<div class="pg" style="left:1259px"><svg class="abs" style="left:9px;top:7px" width="8" height="10" viewBox="0 0 8 10"><path d="M2 1L6 5L2 9" fill="none" stroke="#666" stroke-width="1.400"/></svg></div>
<div class="pt" style="left:1321px">跳至</div>
<div class="pg" style="left:1357px;width:45px"></div>
<div class="pt" style="left:1409px">页</div>
</div>
</div></body></html>
